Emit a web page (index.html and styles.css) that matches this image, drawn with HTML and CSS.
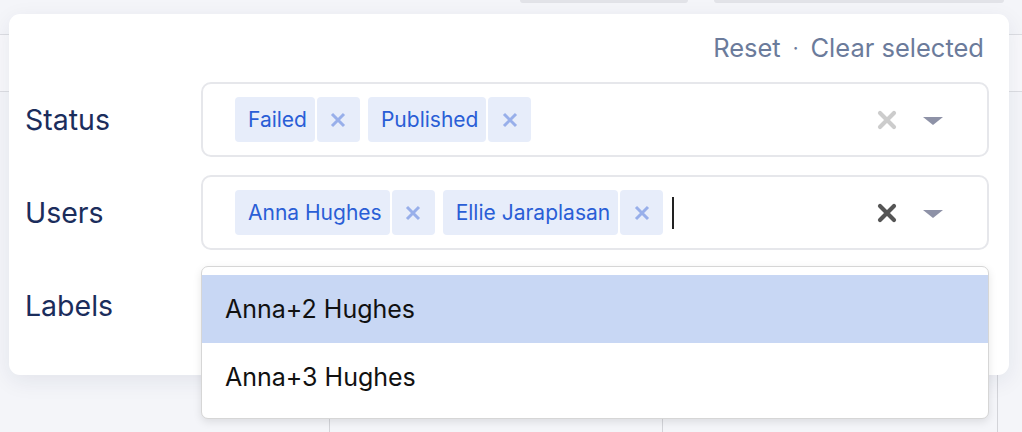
FILE: index.html
```html
<!DOCTYPE html>
<html lang="en">
<head>
<meta charset="utf-8">
<title>Filters</title>
<link rel="stylesheet" href="styles.css">
</head>
<body>
<div class="page">
  <div class="topbar">
    <span class="pill pill-a"></span>
    <span class="pill pill-b"></span>
  </div>
  <div class="thead"></div>
  <div class="tbody">
    <div class="col"></div>
    <div class="col"></div>
    <div class="col"></div>
    <div class="col last"></div>
  </div>

  <div class="popover">
    <div class="actions">
      <span class="link">Reset</span>
      <span class="sep">·</span>
      <span class="link">Clear selected</span>
    </div>

    <div class="row">
      <div class="label">Status</div>
      <div class="select">
        <div class="values">
          <span class="tag"><span class="tag-text">Failed</span><span class="tag-remove"><svg viewBox="0 0 16 16" width="16" height="16"><path d="M2 2L14 14M14 2L2 14"/></svg></span></span>
          <span class="tag"><span class="tag-text">Published</span><span class="tag-remove"><svg viewBox="0 0 16 16" width="16" height="16"><path d="M2 2L14 14M14 2L2 14"/></svg></span></span>
        </div>
        <div class="indicators">
          <svg class="clear disabled" viewBox="0 0 20 20" width="20" height="20"><path d="M3 3L17 17M17 3L3 17"/></svg>
          <svg class="caret" viewBox="0 0 20 8" width="20" height="8"><path d="M0 0H20L10 8Z"/></svg>
        </div>
      </div>
    </div>

    <div class="row">
      <div class="label">Users</div>
      <div class="select">
        <div class="values">
          <span class="tag"><span class="tag-text">Anna Hughes</span><span class="tag-remove"><svg viewBox="0 0 16 16" width="16" height="16"><path d="M2 2L14 14M14 2L2 14"/></svg></span></span>
          <span class="tag"><span class="tag-text">Ellie Jaraplasan</span><span class="tag-remove"><svg viewBox="0 0 16 16" width="16" height="16"><path d="M2 2L14 14M14 2L2 14"/></svg></span></span>
          <span class="cursor"></span>
        </div>
        <div class="indicators">
          <svg class="clear" viewBox="0 0 20 20" width="20" height="20"><path d="M3 3L17 17M17 3L3 17"/></svg>
          <svg class="caret" viewBox="0 0 20 8" width="20" height="8"><path d="M0 0H20L10 8Z"/></svg>
        </div>
      </div>
    </div>

    <div class="row">
      <div class="label">Labels</div>
      <div class="select select-open">
        <div class="menu">
          <div class="option active">Anna+2 Hughes</div>
          <div class="option">Anna+3 Hughes</div>
        </div>
      </div>
    </div>
  </div>
</div>
</body>
</html>
```
FILE: styles.css
```css
* { box-sizing: border-box; }
html, body { margin: 0; padding: 0; }
body {
  font-family: "Inter", "Noto Sans", "Liberation Sans", sans-serif;
  background: #f3f4f8;
}
.page {
  position: relative;
  width: 1022px;
  height: 432px;
  overflow: hidden;
  background: #f4f5f9;
}
.topbar {
  height: 34px;
  display: flex;
  gap: 26px;
  padding-left: 520px;
}
.pill {
  height: 3px;
  background: #e2e3e8;
  border-radius: 0 0 6px 6px;
}
.pill-a { width: 168px; }
.pill-b { width: 290px; }
.thead {
  height: 58px;
  border-top: 1px solid #dcdde2;
  border-bottom: 1px solid #dcdde2;
  background: #f8f8fb;
}
.tbody {
  display: grid;
  grid-template-columns: 330px 333px 335px 1fr;
  height: 340px;
}
.col { border-right: 1px solid #d3d4d9; }
.col.last { border-right: 0; }

.popover {
  position: absolute;
  left: 9px;
  top: 14px;
  width: 1000px;
  background: #ffffff;
  border-radius: 11px;
  box-shadow: 0 6px 22px rgba(30, 40, 80, 0.08);
  padding: 0 20px 32px 16px;
}
.actions {
  display: flex;
  justify-content: flex-end;
  align-items: center;
  gap: 12px;
  height: 68px;
  padding-right: 5px;
  padding-bottom: 1px;
  font-size: 25.5px;
  color: #6b7b9b;
}
.sep { font-size: 20px; }
.row {
  display: flex;
  align-items: center;
  margin-bottom: 18px;
}
.row:last-child { margin-bottom: 0; }
.label {
  width: 176px;
  font-size: 28.5px;
  color: #1b2d5c;
}
.select {
  position: relative;
  flex: 1;
  height: 75px;
  border: 2px solid #e6e7eb;
  border-radius: 10px;
  display: flex;
  align-items: center;
  padding-left: 32px;
}
.values {
  flex: 1;
  display: flex;
  align-items: center;
  gap: 8px;
}
.tag {
  display: flex;
  gap: 2px;
  height: 45px;
}
.tag-text {
  display: flex;
  align-items: center;
  background: #e7edfa;
  color: #2a5ed6;
  font-size: 21px;
  padding: 0 8px 0 13px;
  border-radius: 4px;
}
.tag-remove {
  display: flex;
  align-items: center;
  justify-content: center;
  width: 43px;
  background: #e7edfa;
  border-radius: 4px;
}
.tag-remove svg path {
  stroke: #98afea;
  stroke-width: 3;
  fill: none;
}
.cursor {
  width: 2px;
  height: 32px;
  background: #222;
  margin-left: 1px;
}
.indicators {
  display: flex;
  align-items: center;
  gap: 26px;
  padding-right: 44px;
}
.clear path {
  stroke: #555555;
  stroke-width: 4.2;
  stroke-linecap: round;
  fill: none;
}
.clear.disabled path { stroke: #cccccc; }
.caret { margin-top: 2px; }
.caret path { fill: #8e92a7; }

.menu {
  position: absolute;
  left: -2px;
  right: -2px;
  top: -4px;
  background: #ffffff;
  border: 1px solid #d6d6d6;
  border-radius: 7px;
  box-shadow: 0 3px 8px rgba(0, 0, 0, 0.10);
  padding: 8px 0 7px;
}
.option {
  height: 68px;
  display: flex;
  align-items: center;
  padding-left: 23px;
  font-size: 25px;
  color: #111111;
}
.option.active { background: #c8d7f4; }
```
